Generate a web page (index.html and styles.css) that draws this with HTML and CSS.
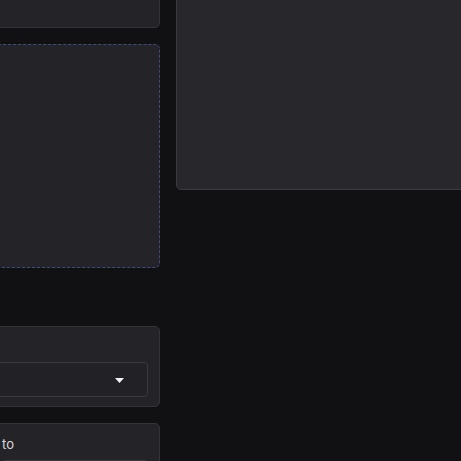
FILE: index.html
```html
<!DOCTYPE html>
<html lang="en">
<head>
    <meta charset="UTF-8">
    <title>Panels</title>
    <link rel="stylesheet" href="styles.css">
</head>
<body>
    <div class="page">
        <div class="col-left">
            <div class="panel panel-top"></div>
            <div class="panel panel-drop"></div>
            <div class="panel panel-select">
                <div class="select">
                    <svg class="caret" width="9" height="5" viewBox="0 0 9 5"><path d="M0 0h9L4.5 5z" fill="#f2f2f2"/></svg>
                </div>
            </div>
            <div class="panel panel-compare">
                <div class="label">to</div>
                <div class="input"></div>
            </div>
        </div>
        <div class="col-right">
            <div class="panel panel-preview"></div>
        </div>
    </div>
</body>
</html>
```

FILE: styles.css
```css
body {
    margin: 0;
    overflow: hidden;
    background: #111114;
    font-family: "Inter", "Noto Sans", sans-serif;
    color: #d4d4d8;
}
.page {
    display: grid;
    grid-template-columns: 172px 1fr;
    column-gap: 16px;
    align-items: start;
    margin: -60px -40px 0 -12px;
}
.col-left {
    display: flex;
    flex-direction: column;
    gap: 16px;
}
.panel {
    box-sizing: border-box;
    background: #242428;
    border: 1px solid #333338;
    border-radius: 5px;
}
.panel-top {
    height: 88px;
}
.panel-drop {
    height: 224px;
    border: 1px dashed #3d4a7c;
}
.panel-select {
    margin-top: 42px;
    height: 81px;
    padding: 35px 11px 9px 0;
}
.select {
    box-sizing: border-box;
    height: 35px;
    background: #222226;
    border: 1px solid #3a3a3f;
    border-radius: 4px;
    display: flex;
    align-items: center;
    justify-content: flex-end;
    padding-right: 23px;
}
.caret {
    display: block;
    margin-top: 2px;
}
.panel-compare {
    height: 80px;
    padding: 10px 11px 0 13px;
}
.label {
    font-size: 13px;
    line-height: 20px;
    color: #d8d8dc;
}
.input {
    margin-top: 6px;
    height: 34px;
    background: #222226;
    border: 1px solid #3a3a3f;
    border-radius: 4px;
}
.panel-preview {
    height: 250px;
    background: #28282c;
    border-color: #3a3a3f;
}
```
